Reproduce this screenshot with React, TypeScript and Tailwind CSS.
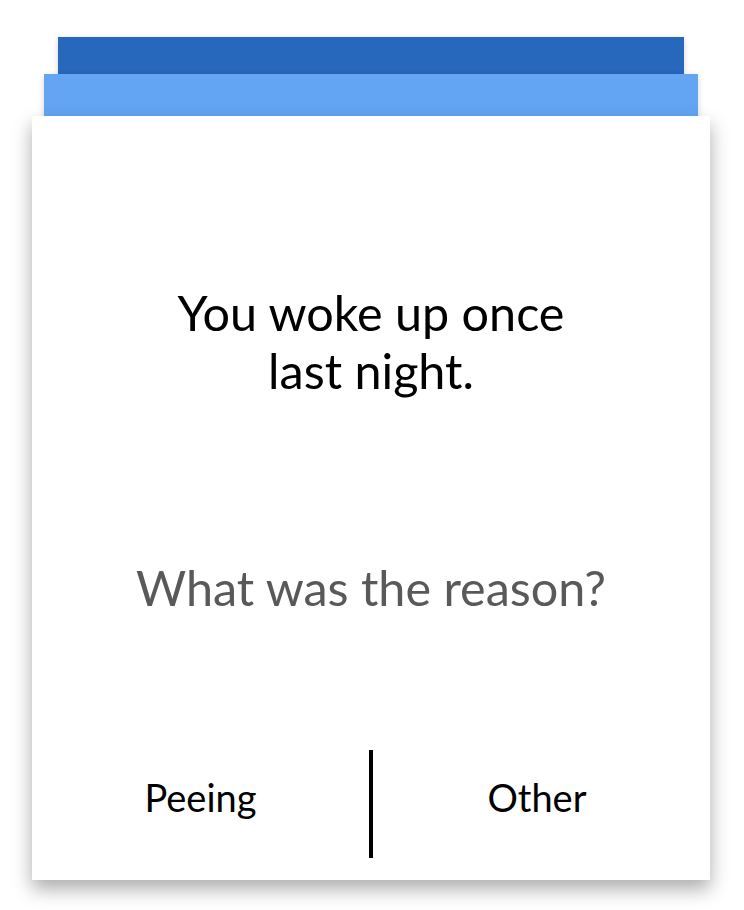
import React from 'react';

export default function App() {
  return (
    <div className="min-h-screen bg-white pt-[37px] pl-[32px] font-['Lato','Liberation_Sans',sans-serif]">
      <div className="w-[678px] flex flex-col items-center">
        <div className="w-[626px] h-[37px] bg-[#2767bc] shadow-[0_2px_6px_rgba(0,0,0,0.18)]" />
        <div className="relative w-[654px] h-[42px] bg-[#63a5f3] shadow-[0_2px_6px_rgba(0,0,0,0.18)]" />
        <div className="relative w-[678px] h-[764px] bg-white shadow-[0_9px_18px_rgba(0,0,0,0.33)] flex flex-col">
          <h1 className="pt-[167px] text-center text-[48.5px] leading-[1.2] text-black font-normal">
            You woke up once
            <br />
            last night.
          </h1>
          <p className="mt-[159px] text-center text-[48.5px] leading-[1.2] text-[#595959]">
            What was the reason?
          </p>
          <div className="mt-auto mb-[22px] flex items-center">
            <button className="w-[337px] mb-[13px] text-[38px] leading-[1.2] text-black text-center">Peeing</button>
            <div className="w-[4px] h-[108px] bg-black" />
            <button className="w-[337px] mb-[13px] pr-[9px] text-[38px] leading-[1.2] text-black text-center">Other</button>
          </div>
        </div>
      </div>
    </div>
  );
}
